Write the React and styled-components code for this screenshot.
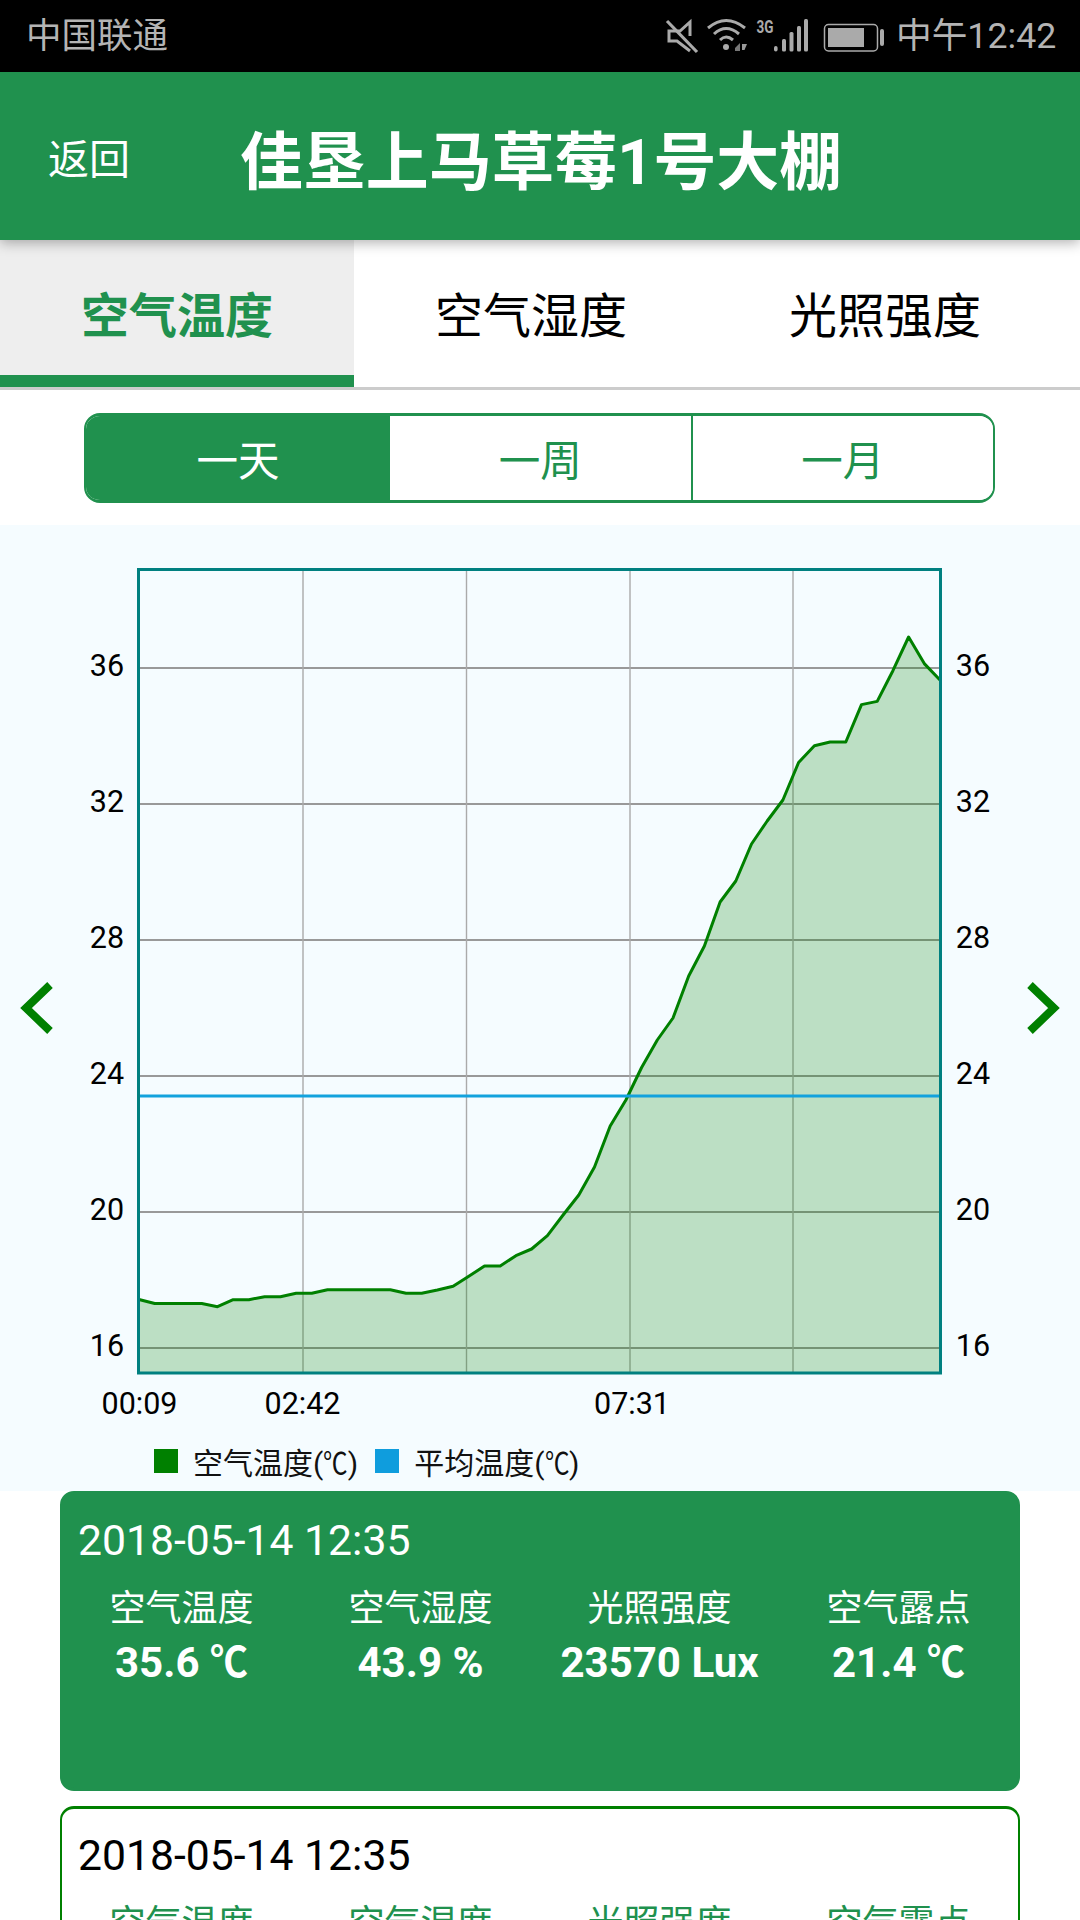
import React from "react";
import styled, { createGlobalStyle } from "styled-components";

const GREEN = "#20914e";
const LINE = "#008000";
const FONT = `Roboto, "Noto Sans CJK SC", sans-serif`;

const Global = createGlobalStyle`
  html, body { margin: 0; padding: 0; background: #fff; }
  body { font-family: ${FONT}; }
  * { box-sizing: border-box; }
`;

const Page = styled.div`
  width: 1080px;
  height: 1920px;
  overflow: hidden;
  background: #fff;
`;

const StatusBar = styled.div`
  height: 72px;
  background: #000;
  color: #b4b4b4;
  display: flex;
  align-items: center;
  justify-content: space-between;
  padding: 0 25px 0 26px;
`;
const Carrier = styled.span`
  font-size: 35.5px;
  line-height: 72px;
`;
const StatusRight = styled.div`
  display: flex;
  align-items: center;
`;
const StatusIcons = styled.svg`
  width: 230px;
  height: 44px;
  margin-right: 6px;
  display: block;
`;
const Clock = styled.span`
  font-size: 35.7px;
  font-weight: 400;
  line-height: 72px;
  width: 159px;
  white-space: nowrap;
`;

const Header = styled.header`
  position: relative;
  z-index: 2;
  height: 168px;
  background: ${GREEN};
  color: #fff;
  display: flex;
  align-items: center;
  padding-left: 48px;
  box-shadow: 0 3px 12px rgba(0, 0, 0, 0.3);
`;
const Back = styled.span`
  font-size: 41px;
  width: 192px;
`;
const Title = styled.h1`
  margin: 0;
  font-size: 62.9px;
  font-weight: 700;
  white-space: nowrap;
`;

const Tabs = styled.nav`
  display: flex;
  height: 150px;
  border-bottom: 3px solid #ccc;
`;
const Tab = styled.div`
  width: 354px;
  display: flex;
  align-items: center;
  justify-content: center;
  padding-top: 8px;
  font-size: 48px;
  font-weight: ${(p) => (p.$active ? 700 : 400)};
  color: ${(p) => (p.$active ? GREEN : "#000")};
  background: ${(p) => (p.$active ? "#eee" : "#fff")};
  border-bottom: 12px solid ${(p) => (p.$active ? GREEN : "transparent")};
`;

const Ranges = styled.div`
  display: flex;
  width: 911px;
  height: 90px;
  margin: 23px 0 22px 84px;
  border: 2.5px solid ${GREEN};
  border-top-width: 3px;
  border-bottom-width: 3px;
  border-radius: 16px;
  overflow: hidden;
`;
const Range = styled.div`
  flex: ${(p) => (p.$active ? "0 0 304px" : "1 1 0")};
  display: flex;
  align-items: center;
  justify-content: center;
  font-size: 41.5px;
  color: ${(p) => (p.$active ? "#fff" : GREEN)};
  background: ${(p) => (p.$active ? GREEN : "#fff")};
  border-left: ${(p) => (p.$divider ? `2.5px solid ${GREEN}` : "none")};
`;

const ChartSection = styled.section`
  display: flex;
  align-items: center;
  height: 966px;
  background: #f5fcff;
`;
const ArrowButton = styled.div`
  flex: 0 0 68px;
  display: flex;
  padding-left: ${(p) => (p.$side === "left" ? "20px" : "12px")};
`;
const ChartColumn = styled.div`
  flex: 1 1 0;
  display: flex;
  flex-direction: column;
`;
const Plot = styled.svg`
  width: 944px;
  height: 905px;
  display: block;
`;
const AxisText = styled.text`
  font-family: Roboto, sans-serif;
  font-size: 30.5px;
  fill: #000;
`;
const Legend = styled.div`
  height: 61px;
  display: flex;
  padding: 19px 0 0 86px;
`;
const LegendItem = styled.div`
  display: flex;
  align-items: center;
  height: 24px;
  margin-right: 17px;
  font-size: 30px;
  color: #111;
  white-space: nowrap;
`;
const Swatch = styled.i`
  width: 24px;
  height: 24px;
  margin-right: ${(p) => p.$gap}px;
  background: ${(p) => p.$color};
`;
const LegendUnit = styled.span`
  display: inline-block;
  transform: scaleX(0.82);
  transform-origin: left center;
  margin-right: -5.5px;
`;

const Cards = styled.div`
  display: flex;
  flex-direction: column;
  gap: 15px;
  padding: 0 60px;
`;
const Card = styled.article`
  flex: 0 0 300px;
  height: 300px;
  padding: 24px 0 0 0;
  border-radius: 14px;
  border: solid ${(p) => (p.$active ? GREEN : LINE)};
  border-width: 3px 2px;
  background: ${(p) => (p.$active ? GREEN : "#fff")};
  color: ${(p) => (p.$active ? "#fff" : "#000")};
`;
const CardDate = styled.div`
  font-size: 42.7px;
  line-height: 44px;
  padding-left: 16px;
  white-space: nowrap;
`;
const Metrics = styled.div`
  display: grid;
  grid-template-columns: repeat(4, 1fr);
  margin-top: 24px;
  text-align: center;
`;
const Metric = styled.div`
  display: flex;
  flex-direction: column;
`;
const MetricLabel = styled.span`
  font-size: 36px;
  line-height: 46px;
  color: ${(p) => (p.$active ? "#fff" : GREEN)};
`;
const MetricValue = styled.span`
  margin-top: 8px;
  font-size: 42px;
  line-height: 46px;
  font-weight: 700;
  white-space: nowrap;
  color: ${(p) => (p.$active ? "#fff" : GREEN)};
`;
const ValueUnit = styled.span`
  display: inline-block;
  transform: scaleX(0.9);
  transform-origin: left center;
  margin-right: -4px;
`;

const YS = [
  1299.5, 1303.5, 1303.5, 1303.5, 1303.5, 1306.7, 1299.7, 1299.7, 1296.7, 1296.7, 1293.3, 1293.3, 1289.7,
  1289.7, 1289.7, 1289.7, 1289.7, 1293.3, 1293.3, 1290, 1286.3, 1276.3, 1266, 1266, 1255.7, 1249, 1235.7,
  1215, 1195, 1167, 1126, 1100, 1067.5, 1040, 1018, 976, 946, 902, 881, 844, 821, 800, 762.5, 745.7, 742,
  742, 704.6, 701.4, 670.7, 637, 663.6, 680,
];
const X0 = 139;
const X1 = 940;
const points = YS.map((y, i) => `${(X0 + (i * (X1 - X0)) / (YS.length - 1)).toFixed(1)},${y}`).join(" ");
const TICKS = [
  [36, 668],
  [32, 804],
  [28, 940],
  [24, 1076],
  [20, 1212],
  [16, 1348],
];
const VGRID = [303, 466.5, 630, 793];
const XLABELS = [
  ["00:09", 139.5],
  ["02:42", 302.5],
  ["07:31", 632],
];

const METRICS = [
  ["空气温度", "35.6", "℃"],
  ["空气湿度", "43.9", "%"],
  ["光照强度", "23570", "Lux"],
  ["空气露点", "21.4", "℃"],
];

const Arrow = ({ dir }) => (
  <svg width="36" height="56" viewBox="0 0 36 56">
    <polyline
      points={dir === "left" ? "30,5 6,28 30,51" : "6,5 30,28 6,51"}
      fill="none"
      stroke={LINE}
      strokeWidth="8"
    />
  </svg>
);

const DataCard = ({ active }) => (
  <Card $active={active}>
    <CardDate>2018-05-14 12:35</CardDate>
    <Metrics>
      {METRICS.map(([label, value, unit]) => (
        <Metric key={label}>
          <MetricLabel $active={active}>{label}</MetricLabel>
          <MetricValue $active={active}>
            {value} {unit === "℃" ? <ValueUnit>{unit}</ValueUnit> : unit}
          </MetricValue>
        </Metric>
      ))}
    </Metrics>
  </Card>
);

export default function App() {
  return (
    <Page>
      <Global />
      <StatusBar>
        <Carrier>中国联通</Carrier>
        <StatusRight>
          <StatusIcons viewBox="0 0 230 44">
            <g fill="none" stroke="#aaa" strokeWidth="3">
              <path d="M7 7 L37 38" strokeWidth="3.2" />
              <path d="M30 22 V8 L20 17 H9 V27 H17 L30 37" />
              <path d="M48 14 Q66 -1 85 14" />
              <path d="M54 20 Q66 9 79 20" />
              <path d="M60 26 Q66 20 73 26" />
            </g>
            <g fill="#aaa">
              <circle cx="66" cy="33" r="3" />
              <path d="M75 34 L80 29 V37 H75 Z" fill="#777" />
              <path d="M82 30 H87 L84.5 36 H82 Z" fill="#999" />
              <text x="96.5" y="18.5" fontFamily="Roboto, sans-serif" fontWeight="700" fontSize="18" textLength="17" lengthAdjust="spacingAndGlyphs">
                3G
              </text>
              <rect x="114" y="32" width="3.6" height="5.5" rx="1.8" />
              <rect x="122" y="25" width="4" height="12.5" rx="1.5" />
              <rect x="129.5" y="18" width="4" height="19.5" rx="1.5" />
              <rect x="137" y="12" width="4" height="25.5" rx="1.5" />
              <rect x="144" y="5" width="4" height="32.5" rx="1.5" />
              <rect x="168" y="14" width="36" height="19" />
              <rect x="220" y="15" width="4" height="17" rx="2" />
            </g>
            <rect x="164.5" y="10.5" width="53" height="26.5" rx="4" fill="none" stroke="#aaa" strokeWidth="1.5" />
          </StatusIcons>
          <Clock>中午12:42</Clock>
        </StatusRight>
      </StatusBar>

      <Header>
        <Back>返回</Back>
        <Title>佳垦上马草莓1号大棚</Title>
      </Header>

      <Tabs>
        <Tab $active>空气温度</Tab>
        <Tab>空气湿度</Tab>
        <Tab>光照强度</Tab>
      </Tabs>

      <Ranges>
        <Range $active>一天</Range>
        <Range>一周</Range>
        <Range $divider>一月</Range>
      </Ranges>

      <ChartSection>
        <ArrowButton $side="left">
          <Arrow dir="left" />
        </ArrowButton>
        <ChartColumn>
          <Plot viewBox="68 525 944 905">
            {TICKS.map(([t, y]) => (
              <line key={t} x1="139" x2="940" y1={y} y2={y} stroke="#999" strokeWidth="2" />
            ))}
            {VGRID.map((x) => (
              <line key={x} x1={x} x2={x} y1="570" y2="1372" stroke="#aaa" strokeWidth="1.4" />
            ))}
            <polygon points={`${X0},1372 ${points} ${X1},1372`} fill="#008000" fillOpacity="0.23" stroke="none" />
            <polyline points={points} fill="none" stroke={LINE} strokeWidth="3" strokeLinejoin="round" />
            <line x1="139" x2="940" y1="1096" y2="1096" stroke="#12a2dd" strokeWidth="3" />
            <rect x="138.5" y="569.5" width="802" height="803.5" fill="none" stroke="#008080" strokeWidth="3" />
            {TICKS.map(([t, y]) => (
              <React.Fragment key={t}>
                <AxisText x="107" y={y + 8} textAnchor="middle">
                  {t}
                </AxisText>
                <AxisText x="973" y={y + 8} textAnchor="middle">
                  {t}
                </AxisText>
              </React.Fragment>
            ))}
            {XLABELS.map(([l, x]) => (
              <AxisText key={l} x={x} y="1414" textAnchor="middle">
                {l}
              </AxisText>
            ))}
          </Plot>
          <Legend>
            <LegendItem>
              <Swatch $color={LINE} $gap={15} />
              <span>
                空气温度(<LegendUnit>℃</LegendUnit>)
              </span>
            </LegendItem>
            <LegendItem>
              <Swatch $color="#0f9ddd" $gap={15} />
              <span>
                平均温度(<LegendUnit>℃</LegendUnit>)
              </span>
            </LegendItem>
          </Legend>
        </ChartColumn>
        <ArrowButton $side="right">
          <Arrow dir="right" />
        </ArrowButton>
      </ChartSection>

      <Cards>
        <DataCard active />
        <DataCard />
      </Cards>
    </Page>
  );
}
